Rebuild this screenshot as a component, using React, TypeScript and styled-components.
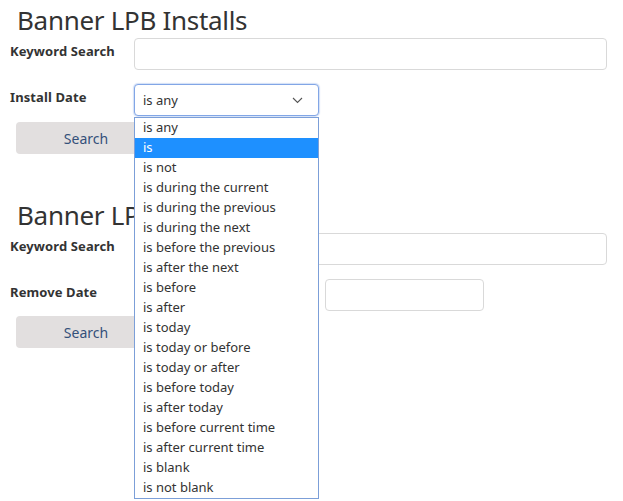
import React from "react";
import styled, { createGlobalStyle } from "styled-components";

const Global = createGlobalStyle`
  html, body { margin: 0; padding: 0; background: #fff; }
  body { font-family: "Noto Sans", "Open Sans", sans-serif; color: #333; }
  * { box-sizing: border-box; }
`;

const Page = styled.div`
  padding: 0 10px;
  width: 623px;
  min-height: 501px;
`;

const Section = styled.section`
  display: flex;
  flex-direction: column;
  height: 195px;
`;

const Title = styled.h1`
  margin: 0;
  padding: 2px 0 0 7px;
  height: 38px;
  font-size: 26px;
  font-weight: 400;
  line-height: 36px;
  color: #333;
  letter-spacing: -0.3px;
  white-space: nowrap;
`;

const Row = styled.div<{ $gap: number }>`
  display: grid;
  grid-template-columns: 124px 1fr;
  align-items: start;
  margin-bottom: ${(p) => p.$gap}px;
`;

const Label = styled.label`
  font-size: 13px;
  font-weight: 700;
  line-height: 16px;
  padding-top: 5px;
  color: #333;
  letter-spacing: 0.1px;
`;

const Fields = styled.div`
  display: flex;
  gap: 6px;
`;

const TextInput = styled.div<{ $w?: number }>`
  height: 32px;
  width: ${(p) => (p.$w ? `${p.$w}px` : "473px")};
  border: 1px solid #d9d9d9;
  border-radius: 4px;
  background: #fff;
`;

const SelectWrap = styled.div`
  position: relative;
  width: 185px;
`;

const SelectBox = styled.div<{ $focused?: boolean }>`
  height: 32px;
  width: 185px;
  border: 1px solid ${(p) => (p.$focused ? "#82a6e6" : "#d9d9d9")};
  border-radius: 4px;
  box-shadow: ${(p) => (p.$focused ? "0 0 1px 1px rgba(130,166,230,0.35)" : "none")};
  display: flex;
  align-items: center;
  justify-content: space-between;
  padding: 0 15px 0 8px;
  font-size: 13px;
  color: #333;
  background: #fff;
`;

const Chevron = () => (
  <svg width="11" height="7" viewBox="0 0 11 7" fill="none">
    <path d="M1 1l4.5 4.5L10 1" stroke="#555" strokeWidth="1.1" />
  </svg>
);

const Dropdown = styled.ul`
  position: absolute;
  top: 33px;
  left: 0;
  width: 185px;
  margin: 0;
  padding: 0;
  list-style: none;
  border: 1px solid #7c9fd8;
  background: #fff;
  z-index: 10;
`;

const Option = styled.li<{ $active?: boolean }>`
  height: 20px;
  line-height: 19px;
  padding-left: 8px;
  font-size: 13px;
  white-space: nowrap;
  background: ${(p) => (p.$active ? "#1e90ff" : "#fff")};
  color: ${(p) => (p.$active ? "#fff" : "#333")};
`;

const Button = styled.button`
  margin-left: 6px;
  width: 140px;
  height: 32px;
  border: none;
  border-radius: 4px;
  background: #e2dfdf;
  color: #34507a;
  font-family: inherit;
  font-size: 14px;
  padding: 0;
`;

const options = [
  "is any",
  "is",
  "is not",
  "is during the current",
  "is during the previous",
  "is during the next",
  "is before the previous",
  "is after the next",
  "is before",
  "is after",
  "is today",
  "is today or before",
  "is today or after",
  "is before today",
  "is after today",
  "is before current time",
  "is after current time",
  "is blank",
  "is not blank",
];

export default function App() {
  return (
    <Page>
      <Global />
      <Section>
        <Title>Banner LPB Installs</Title>
        <Row $gap={14}>
          <Label>Keyword Search</Label>
          <TextInput />
        </Row>
        <Row $gap={6}>
          <Label>Install Date</Label>
          <Fields>
            <SelectWrap>
              <SelectBox $focused>
                <span>is any</span>
                <Chevron />
              </SelectBox>
              <Dropdown>
                {options.map((o, i) => (
                  <Option key={o} $active={i === 1}>
                    {o}
                  </Option>
                ))}
              </Dropdown>
            </SelectWrap>
          </Fields>
        </Row>
        <Button>Search</Button>
      </Section>
      <Section>
        <Title>Banner LPB Removals</Title>
        <Row $gap={14}>
          <Label>Keyword Search</Label>
          <TextInput />
        </Row>
        <Row $gap={5}>
          <Label>Remove Date</Label>
          <Fields>
            <SelectBox>
              <span>is any</span>
              <Chevron />
            </SelectBox>
            <TextInput $w={159} />
          </Fields>
        </Row>
        <Button>Search</Button>
      </Section>
    </Page>
  );
}
